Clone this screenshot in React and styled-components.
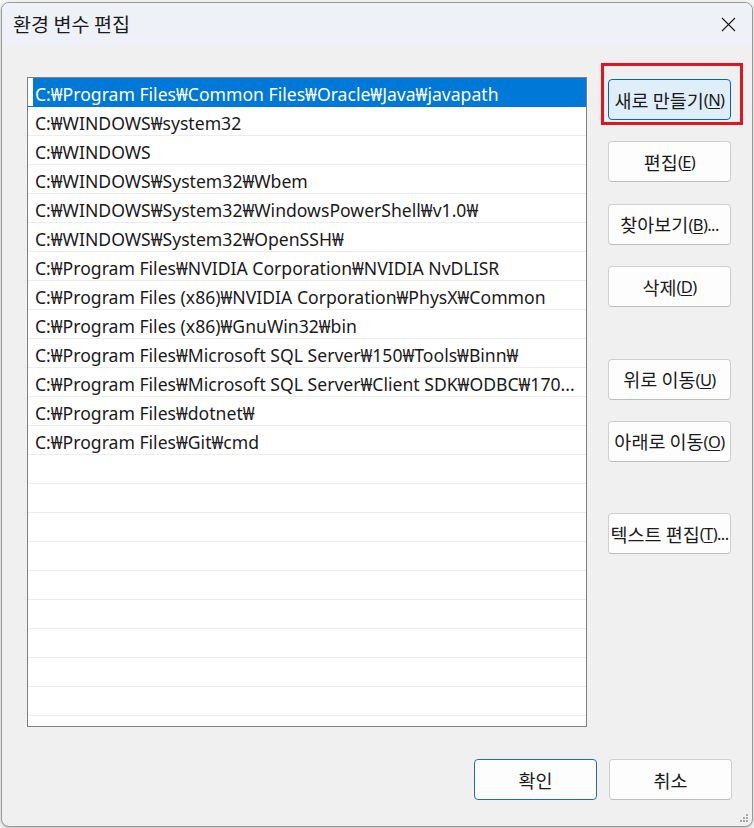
import React from "react";
import styled, { createGlobalStyle, css } from "styled-components";

const Global = createGlobalStyle`
  html, body { margin: 0; padding: 0; }
  body {
    background: #e4e4e4;
    font-family: "Noto Sans", "Noto Sans CJK KR", sans-serif;
    width: 754px;
    height: 828px;
    overflow: hidden;
  }
`;

const Backdrop = styled.div`
  width: 754px;
  height: 828px;
  padding: 2px 1px 1px 1px;
  box-sizing: border-box;
  background: #f4f4f4;
`;

const Window = styled.div`
  position: relative;
  width: 100%;
  height: 100%;
  box-sizing: border-box;
  border: 1px solid #9a9a9a;
  border-radius: 8px;
  background: #f0f0f0;
  display: flex;
  flex-direction: column;
  overflow: hidden;
  box-shadow: 0 1px 3px rgba(0, 0, 0, 0.25);
`;

const TitleBar = styled.div`
  height: 43px;
  flex: 0 0 auto;
  background: #eef2f8;
  display: flex;
  align-items: center;
  justify-content: space-between;
  padding: 0 15px 0 11px;
`;

const Title = styled.div`
  font-family: "Noto Sans CJK KR", sans-serif;
  font-size: 19.6px;
  color: #1a1a1a;
  margin-top: -2px;
`;

const CloseButton = styled.div`
  width: 16px;
  height: 16px;
  display: flex;
  align-items: center;
  justify-content: center;
  margin-right: 1px;
`;

const Body = styled.div`
  flex: 1;
  display: flex;
  flex-direction: column;
  padding: 31px 20px 0 25px;
`;

const Main = styled.div`
  display: flex;
  gap: 21px;
`;

const List = styled.div`
  width: 560px;
  height: 650px;
  box-sizing: border-box;
  border: 1px solid #7f7f7f;
  background: #fff;
  overflow: hidden;
`;

const Row = styled.div`
  height: 29px;
  box-sizing: border-box;
  border-bottom: 1px solid #ededed;
  padding: 4px 0 0 7px;
  line-height: 25px;
  font-size: 17.6px;
  color: #1a1a1a;
  white-space: nowrap;
  overflow: hidden;
  ${(p) =>
    p.$selected &&
    css`
      background: #0078d7;
      color: #fff;
      box-shadow: inset 5px 0 0 #fff;
      border-bottom-color: #0078d7;
    `}
`;

const ButtonColumn = styled.div`
  display: flex;
  flex-direction: column;
  padding-top: 2px;
  gap: 21.4px;
`;

const Btn = styled.div`
  position: relative;
  width: 123px;
  height: 41px;
  box-sizing: border-box;
  border: 1px solid ${(p) => (p.$primary ? "#1f6fb2" : "#cfcfcf")};
  border-radius: 4px;
  background: ${(p) => (p.$active ? "#e0eef9" : "#fdfdfd")};
  display: flex;
  align-items: center;
  justify-content: center;
  font-family: "Noto Sans CJK KR", sans-serif;
  font-size: 18.5px;
  color: #1a1a1a;
  white-space: nowrap;
  letter-spacing: 0px;
  margin-top: ${(p) => (p.$gapBefore ? "30px" : "0")};
  border-bottom-color: ${(p) => (p.$primary ? "#1f6fb2" : p.$active ? "#0067c0" : "#bdbdbd")};
  ${(p) => p.$active && css`border-color: #0067c0;`}
`;

const Mn = styled.span`
  font-family: "Noto Sans", sans-serif;
  font-size: 16.5px;
  letter-spacing: -0.6px;
  u { text-decoration-thickness: 1px; text-underline-offset: 2px; }
`;

const Highlight = styled.div`
  position: absolute;
  left: -8px;
  right: -13px;
  top: -17px;
  bottom: -6px;
  border: 3px solid #e0161e;
  pointer-events: none;
`;

const Footer = styled.div`
  display: flex;
  justify-content: flex-end;
  gap: 12px;
  margin-top: 32px;
`;

const Grip = styled.svg`
  position: absolute;
  right: 3px;
  bottom: 3px;
`;

const items = [
  "C:₩Program Files₩Common Files₩Oracle₩Java₩javapath",
  "C:₩WINDOWS₩system32",
  "C:₩WINDOWS",
  "C:₩WINDOWS₩System32₩Wbem",
  "C:₩WINDOWS₩System32₩WindowsPowerShell₩v1.0₩",
  "C:₩WINDOWS₩System32₩OpenSSH₩",
  "C:₩Program Files₩NVIDIA Corporation₩NVIDIA NvDLISR",
  "C:₩Program Files (x86)₩NVIDIA Corporation₩PhysX₩Common",
  "C:₩Program Files (x86)₩GnuWin32₩bin",
  "C:₩Program Files₩Microsoft SQL Server₩150₩Tools₩Binn₩",
  "C:₩Program Files₩Microsoft SQL Server₩Client SDK₩ODBC₩170...",
  "C:₩Program Files₩dotnet₩",
  "C:₩Program Files₩Git₩cmd",
];

const Label = ({ text, k, tail = "" }) => (
  <>
    {text}
    <Mn>
      (<u>{k}</u>){tail}
    </Mn>
  </>
);

export default function App() {
  const rows = [...items, ...Array(10).fill("")];
  return (
    <>
      <Global />
      <Backdrop>
        <Window>
          <TitleBar>
            <Title>환경 변수 편집</Title>
            <CloseButton>
              <svg width="15" height="15" viewBox="0 0 15 15">
                <path d="M1 1 L14 14 M14 1 L1 14" stroke="#1a1a1a" strokeWidth="1.1" />
              </svg>
            </CloseButton>
          </TitleBar>
          <Body>
            <Main>
              <List>
                {rows.map((t, i) => (
                  <Row key={i} $selected={i === 0}>
                    {t}
                  </Row>
                ))}
              </List>
              <ButtonColumn>
                <Btn $active>
                  <Label text="새로 만들기" k="N" />
                  <Highlight />
                </Btn>
                <Btn>
                  <Label text="편집" k="E" />
                </Btn>
                <Btn>
                  <Label text="찾아보기" k="B" tail="..." />
                </Btn>
                <Btn>
                  <Label text="삭제" k="D" />
                </Btn>
                <Btn $gapBefore>
                  <Label text="위로 이동" k="U" />
                </Btn>
                <Btn>
                  <Label text="아래로 이동" k="O" />
                </Btn>
                <Btn $gapBefore>
                  <Label text="텍스트 편집" k="T" tail="..." />
                </Btn>
              </ButtonColumn>
            </Main>
            <Footer>
              <Btn $primary>확인</Btn>
              <Btn>취소</Btn>
            </Footer>
          </Body>
          <Grip width="10" height="10" viewBox="0 0 10 10">
            <g fill="#a8a8a8">
              <rect x="7" y="1" width="2" height="2" />
              <rect x="4" y="4" width="2" height="2" />
              <rect x="7" y="4" width="2" height="2" />
              <rect x="1" y="7" width="2" height="2" />
              <rect x="4" y="7" width="2" height="2" />
              <rect x="7" y="7" width="2" height="2" />
            </g>
          </Grip>
        </Window>
      </Backdrop>
    </>
  );
}
